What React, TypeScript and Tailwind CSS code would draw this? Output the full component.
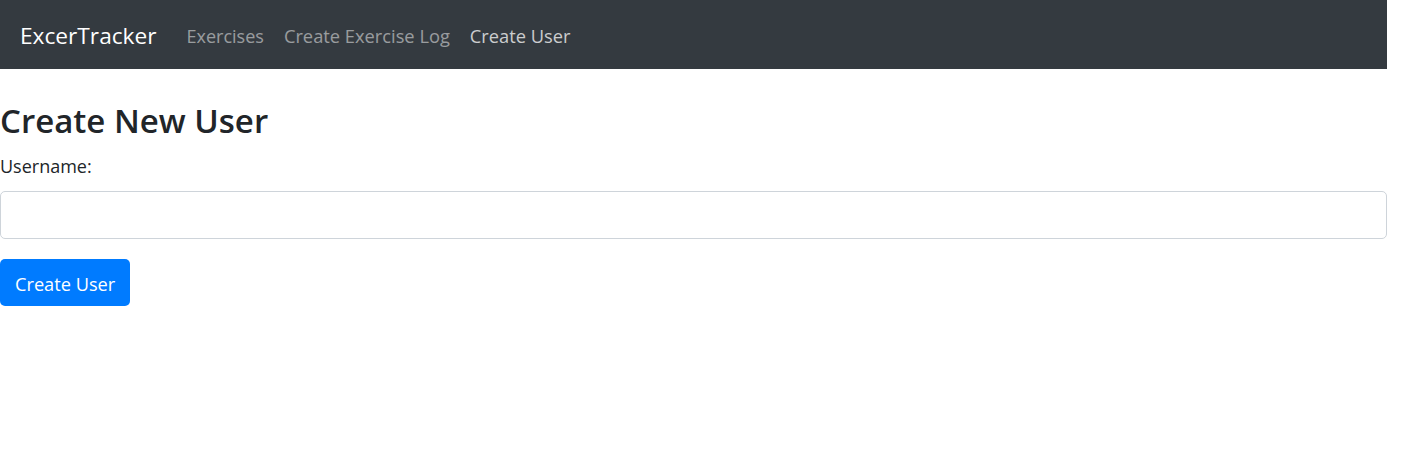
import React from 'react';

const font = { fontFamily: '"Open Sans", "Noto Sans", sans-serif' };

const NavBar: React.FC = () => {
  return (
    <nav className="flex h-[69px] w-[1387px] items-center bg-[#343a40] px-5 pt-[2px]">
      <a href="#" className="mr-5 text-[22.7px] leading-[36px] text-white">
        ExcerTracker
      </a>
      <ul className="flex items-center">
        <li>
          <a href="#" className="block px-2.5 text-[18px] leading-[30px] text-white/50">
            Exercises
          </a>
        </li>
        <li>
          <a href="#" className="block px-2.5 text-[18.3px] leading-[30px] text-white/50">
            Create Exercise Log
          </a>
        </li>
        <li>
          <a href="#" className="block px-2.5 text-[18.3px] leading-[30px] text-white/75">
            Create User
          </a>
        </li>
      </ul>
    </nav>
  );
};

const CreateUser: React.FC = () => {
  return (
    <div className="w-[1387px] pt-[31px] text-[#212529]">
      <h3 className="mb-[9px] text-[33px] font-semibold leading-[42px]">Create New User</h3>
      <form onSubmit={(e) => e.preventDefault()}>
        <div className="mb-5">
          <label className="mb-2.5 block text-[18px] leading-[30px]">Username: </label>
          <input
            type="text"
            className="block h-[47.5px] w-full rounded-[5px] border border-[#ced4da] bg-white px-[15px] text-[18px] outline-none"
          />
        </div>
        <button
          type="submit"
          className="h-[47.5px] rounded-[5px] bg-[#007bff] px-[15px] pt-[3px] text-[18.2px] leading-[30px] text-white"
        >
          Create User
        </button>
      </form>
    </div>
  );
};

export default function App() {
  return (
    <div className="min-h-[467px] bg-white" style={font}>
      <NavBar />
      <CreateUser />
    </div>
  );
}
